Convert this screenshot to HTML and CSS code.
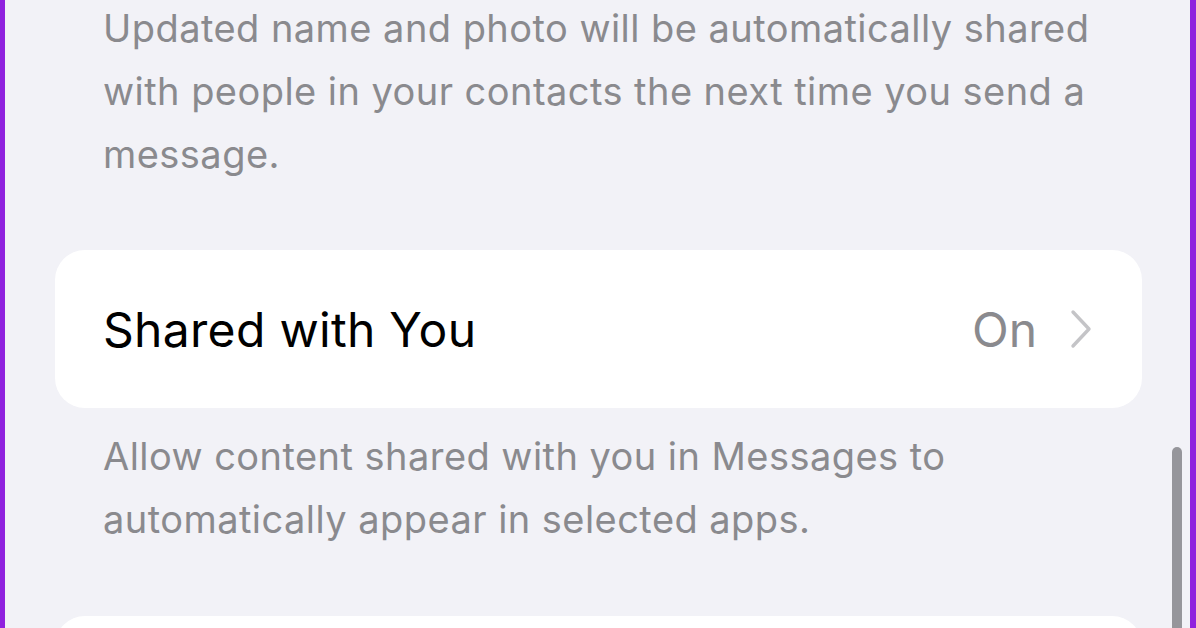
FILE: index.html
```html
<!DOCTYPE html>
<html lang="en">
<head>
    <meta charset="UTF-8">
    <meta name="viewport" content="width=device-width, initial-scale=1.0">
    <title>Settings - Messages</title>
    <link rel="stylesheet" href="styles.css">
</head>
<body>
    <div class="screen">
        <section class="settings">
            <p class="footnote footnote-top">Updated name and photo will be automatically shared with people in your contacts the next time you send a message.</p>

            <a href="#" class="group-row">
                <span class="row-label">Shared with You</span>
                <span class="row-value">
                    On
                    <svg class="chevron" width="25" height="40" viewBox="0 0 25 40">
                        <path d="M4 3 L20 20 L4 37" fill="none" stroke="currentColor" stroke-width="3.4" stroke-linecap="round" stroke-linejoin="round"/>
                    </svg>
                </span>
            </a>

            <p class="footnote">Allow content shared with you in Messages to automatically appear in selected apps.</p>

            <div class="group-row group-row-next"></div>
        </section>

        <div class="scroll-indicator"></div>
    </div>
</body>
</html>
```

FILE: styles.css
```css
html, body {
    margin: 0;
    padding: 0;
    height: 100%;
}

body {
    background-color: #9021de;
    font-family: Inter, "Noto Sans", sans-serif;
    overflow: hidden;
}

.screen {
    position: relative;
    margin: 0 6px 0 5px;
    height: 100%;
    background-color: #f2f2f7;
    overflow: hidden;
}

.settings {
    display: flex;
    flex-direction: column;
    padding: 0 48px 0 50px;
}

.footnote {
    margin: 0;
    padding: 0 40px 0 48px;
    font-size: 38px;
    line-height: 63px;
    letter-spacing: 0.45px;
    color: #8a8a8e;
}

.footnote-top {
    margin-top: -3px;
    margin-bottom: 64px;
}

.group-row {
    display: flex;
    align-items: center;
    justify-content: space-between;
    height: 158px;
    padding: 0 48px;
    background-color: #ffffff;
    border-radius: 30px;
    text-decoration: none;
    color: #000000;
    margin-bottom: 17px;
}

.row-label {
    font-size: 48px;
    letter-spacing: 0.3px;
}

.row-value {
    display: flex;
    align-items: center;
    gap: 32px;
    font-size: 48px;
    color: #8a8a8e;
}

.chevron {
    color: #c4c4c7;
}

.group-row-next {
    margin-top: 65px;
}

.scroll-indicator {
    position: absolute;
    left: 1167px;
    top: 447px;
    width: 10px;
    height: 200px;
    border-radius: 5px;
    background-color: #96969b;
}
```
